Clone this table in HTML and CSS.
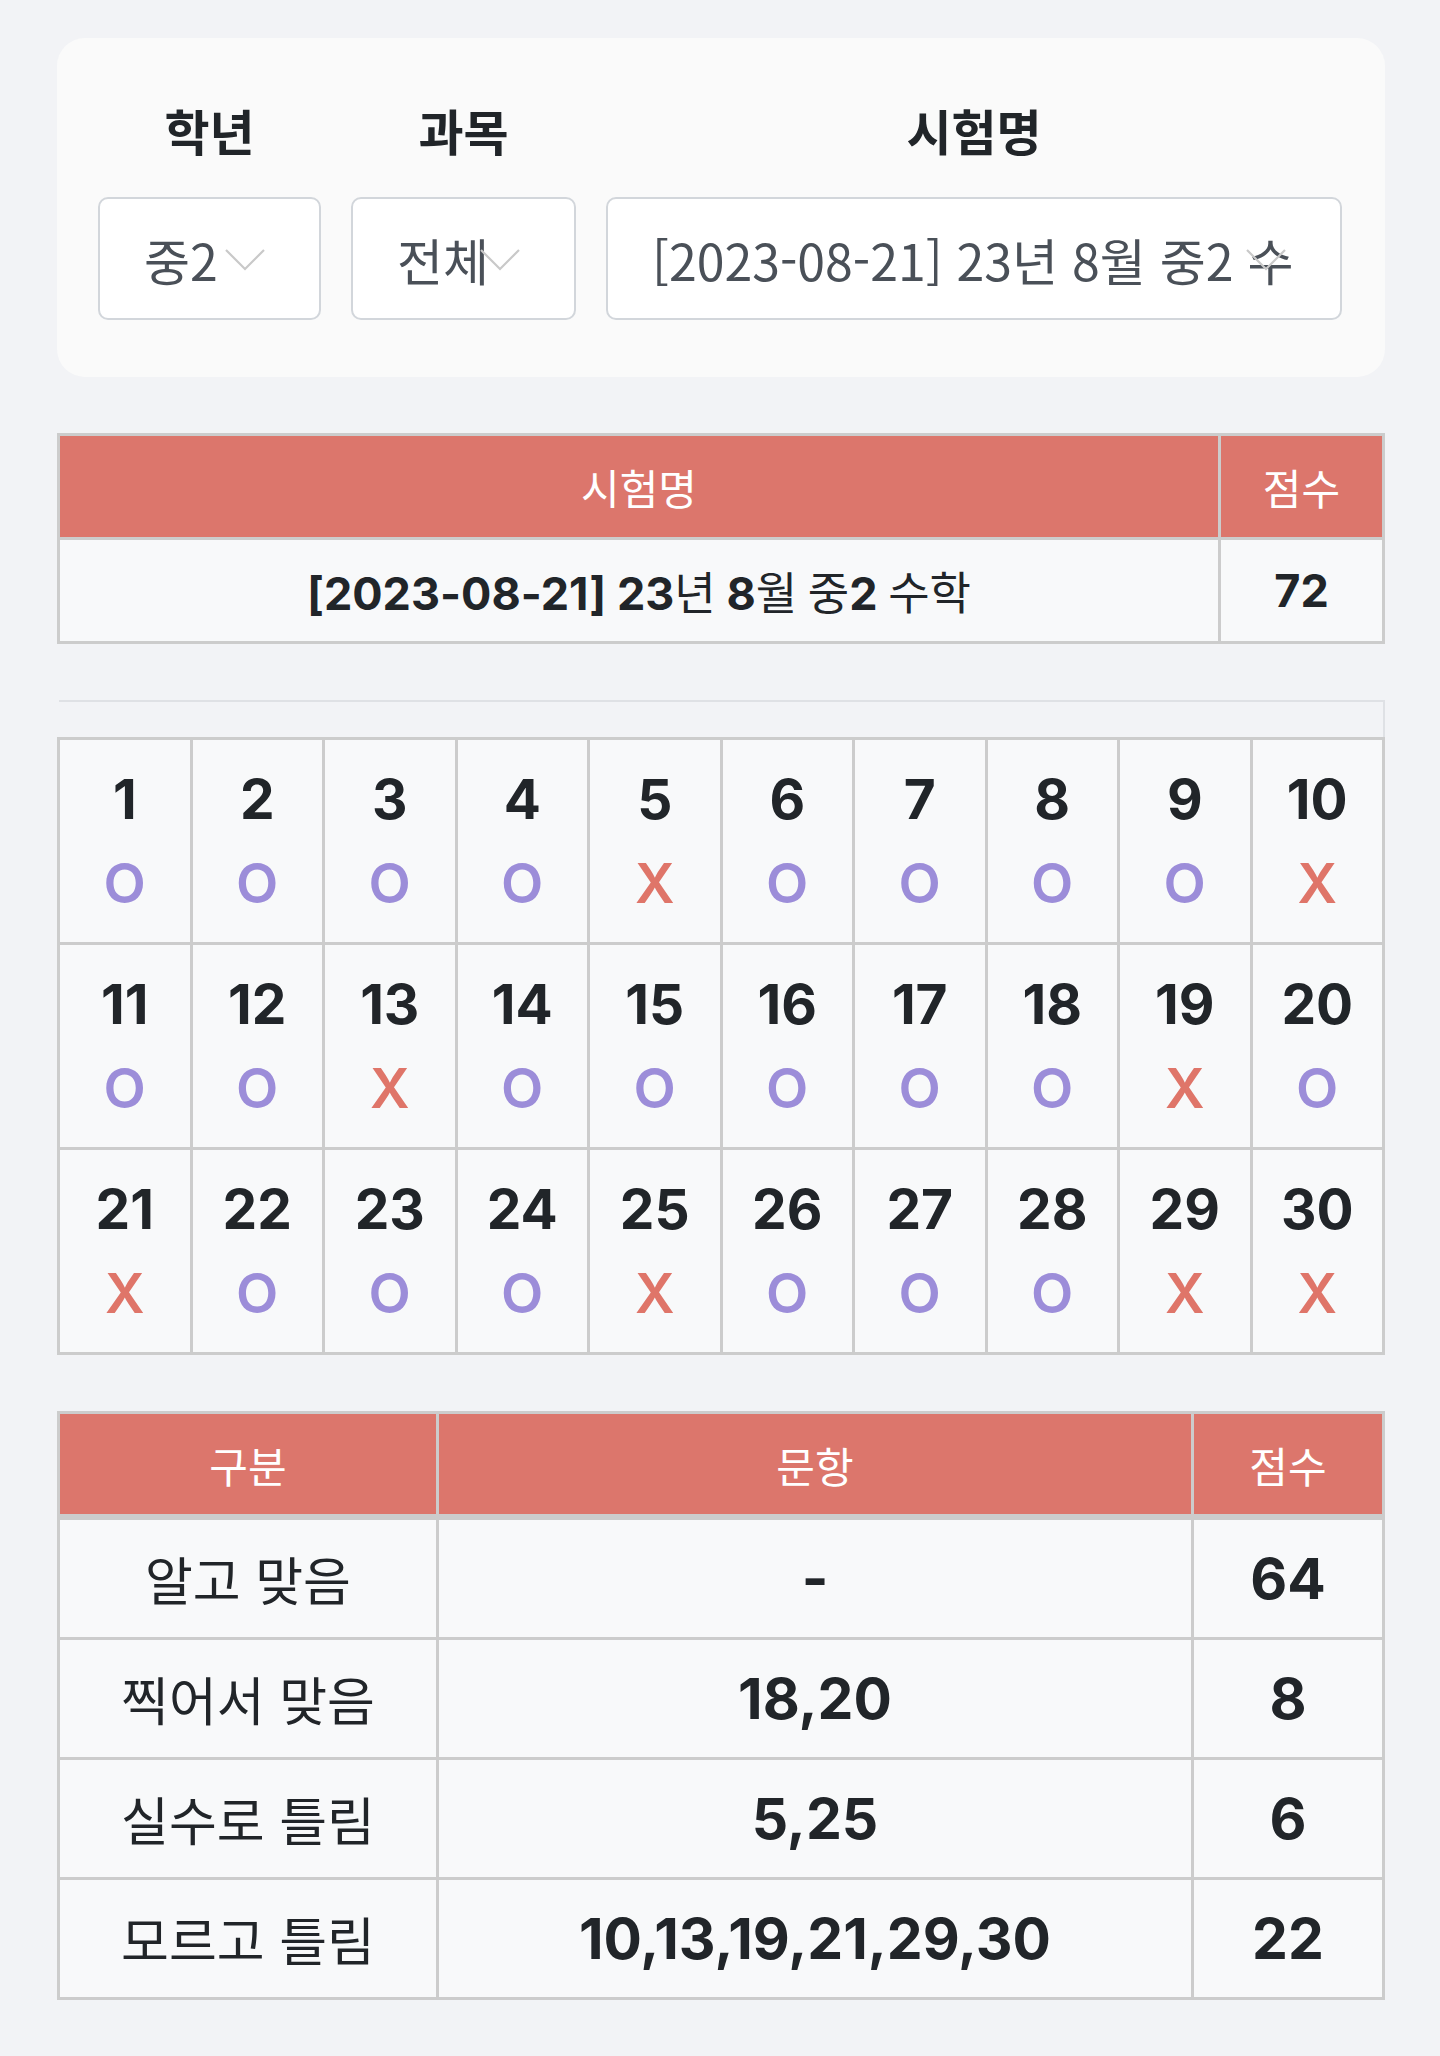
FILE: index.html
```html
<!DOCTYPE html>
<html lang="ko">
<head>
<meta charset="utf-8">
<title>시험 결과</title>
<link rel="stylesheet" href="styles.css">
</head>
<body>
<main class="page">
  <section class="filter-card">
    <div class="field field-grade">
      <div class="field-label">학년</div>
      <div class="select">
        <span class="select-value">중2</span>
        <svg class="chev" viewBox="0 0 40 22" aria-hidden="true"><polyline points="1,1 20,20 39,1" /></svg>
      </div>
    </div>
    <div class="field field-subject">
      <div class="field-label">과목</div>
      <div class="select">
        <span class="select-value">전체</span>
        <svg class="chev" viewBox="0 0 40 22" aria-hidden="true"><polyline points="1,1 20,20 39,1" /></svg>
      </div>
    </div>
    <div class="field field-exam">
      <div class="field-label">시험명</div>
      <div class="select">
        <span class="select-value select-value-clip">[2023-08-21] 23년 8월 중2 수학</span>
        <svg class="chev" viewBox="0 0 40 22" aria-hidden="true"><polyline points="1,1 20,20 39,1" /></svg>
      </div>
    </div>
  </section>

  <table class="exam-table">
    <thead>
      <tr><th class="col-name">시험명</th><th class="col-score">점수</th></tr>
    </thead>
    <tbody>
      <tr>
        <td class="col-name">[2023-08-21] 23<span class="kr">년</span> 8<span class="kr">월</span> <span class="kr">중</span>2 <span class="kr">수학</span></td>
        <td class="col-score">72</td>
      </tr>
    </tbody>
  </table>

  <div class="answer-head"></div>
  <div class="answer-grid">
    <div class="cell"><div class="q-num">1</div><div class="q-mark o">O</div></div>
    <div class="cell"><div class="q-num">2</div><div class="q-mark o">O</div></div>
    <div class="cell"><div class="q-num">3</div><div class="q-mark o">O</div></div>
    <div class="cell"><div class="q-num">4</div><div class="q-mark o">O</div></div>
    <div class="cell"><div class="q-num">5</div><div class="q-mark x">X</div></div>
    <div class="cell"><div class="q-num">6</div><div class="q-mark o">O</div></div>
    <div class="cell"><div class="q-num">7</div><div class="q-mark o">O</div></div>
    <div class="cell"><div class="q-num">8</div><div class="q-mark o">O</div></div>
    <div class="cell"><div class="q-num">9</div><div class="q-mark o">O</div></div>
    <div class="cell"><div class="q-num">10</div><div class="q-mark x">X</div></div>
    <div class="cell"><div class="q-num">11</div><div class="q-mark o">O</div></div>
    <div class="cell"><div class="q-num">12</div><div class="q-mark o">O</div></div>
    <div class="cell"><div class="q-num">13</div><div class="q-mark x">X</div></div>
    <div class="cell"><div class="q-num">14</div><div class="q-mark o">O</div></div>
    <div class="cell"><div class="q-num">15</div><div class="q-mark o">O</div></div>
    <div class="cell"><div class="q-num">16</div><div class="q-mark o">O</div></div>
    <div class="cell"><div class="q-num">17</div><div class="q-mark o">O</div></div>
    <div class="cell"><div class="q-num">18</div><div class="q-mark o">O</div></div>
    <div class="cell"><div class="q-num">19</div><div class="q-mark x">X</div></div>
    <div class="cell"><div class="q-num">20</div><div class="q-mark o">O</div></div>
    <div class="cell"><div class="q-num">21</div><div class="q-mark x">X</div></div>
    <div class="cell"><div class="q-num">22</div><div class="q-mark o">O</div></div>
    <div class="cell"><div class="q-num">23</div><div class="q-mark o">O</div></div>
    <div class="cell"><div class="q-num">24</div><div class="q-mark o">O</div></div>
    <div class="cell"><div class="q-num">25</div><div class="q-mark x">X</div></div>
    <div class="cell"><div class="q-num">26</div><div class="q-mark o">O</div></div>
    <div class="cell"><div class="q-num">27</div><div class="q-mark o">O</div></div>
    <div class="cell"><div class="q-num">28</div><div class="q-mark o">O</div></div>
    <div class="cell"><div class="q-num">29</div><div class="q-mark x">X</div></div>
    <div class="cell"><div class="q-num">30</div><div class="q-mark x">X</div></div>
  </div>

  <table class="summary-table">
    <thead>
      <tr><th class="col-kind">구분</th><th class="col-items">문항</th><th class="col-pts">점수</th></tr>
    </thead>
    <tbody>
      <tr><td class="col-kind">알고 맞음</td><td class="col-items num">-</td><td class="col-pts num">64</td></tr>
      <tr><td class="col-kind">찍어서 맞음</td><td class="col-items num">18,20</td><td class="col-pts num">8</td></tr>
      <tr><td class="col-kind">실수로 틀림</td><td class="col-items num">5,25</td><td class="col-pts num">6</td></tr>
      <tr><td class="col-kind">모르고 틀림</td><td class="col-items num">10,13,19,21,29,30</td><td class="col-pts num">22</td></tr>
    </tbody>
  </table>
</main>
</body>
</html>
```

FILE: styles.css
```css
* { box-sizing: border-box; }

body {
  margin: 0;
  background: #f2f3f6;
  font-family: "Noto Sans CJK KR", "Noto Sans", sans-serif;
  color: #212529;
}

.page {
  padding: 38px 55px 52px 57px;
}

/* ---------- filter card ---------- */
.filter-card {
  background: #fafafa;
  border-radius: 28px;
  padding: 60px 43px 57px 41px;
  display: flex;
  gap: 30px;
}

.field {
  display: flex;
  flex-direction: column;
  gap: 35px;
}

.field-grade { width: 223px; }
.field-subject { width: 225px; }
.field-exam { flex: 1; min-width: 0; }

.field-label {
  text-align: center;
  font-size: 49px;
  font-weight: 700;
  line-height: 64px;
  color: #212529;
}

.select {
  position: relative;
  height: 123px;
  background: #ffffff;
  border: 2px solid #d2d6db;
  border-radius: 10px;
  padding: 0 46px 0 44px;
  display: flex;
  align-items: center;
}

.select-value {
  flex: 1;
  min-width: 0;
  font-size: 50px;
  line-height: 80px;
  color: #4a5058;
  white-space: nowrap;
}

.select-value-clip {
  overflow: hidden;
}

.chev {
  position: absolute;
  right: 54px;
  top: 50px;
  width: 40px;
  height: 22px;
}

.chev polyline {
  fill: none;
  stroke: #c9c9c9;
  stroke-width: 2.2;
}

/* ---------- shared table ---------- */
.exam-table,
.summary-table {
  width: 100%;
  border-collapse: separate;
  border-spacing: 0;
  border-top: 3px solid #cccccc;
  border-left: 3px solid #cccccc;
  font-family: "Inter", "Noto Sans CJK KR", sans-serif;
}

.exam-table th,
.exam-table td,
.summary-table th,
.summary-table td {
  border-right: 3px solid #cccccc;
  border-bottom: 3px solid #cccccc;
  padding: 0;
  text-align: center;
  vertical-align: middle;
}

.exam-table th,
.summary-table th {
  background: #dc766c;
  color: #ffffff;
  font-family: "Noto Sans CJK KR", sans-serif;
  font-weight: 400;
}

.exam-table td,
.summary-table td {
  background: #f8f9fa;
  color: #212529;
}

/* ---------- exam table ---------- */
.exam-table {
  margin-top: 56px;
}

.exam-table th {
  height: 104px;
  font-size: 42px;
}

.exam-table td {
  height: 104px;
  font-size: 45px;
  font-weight: 700;
}

.exam-table .col-score { width: 164px; }

.kr {
  font-family: "Noto Sans CJK KR", sans-serif;
  font-weight: 400;
}

/* ---------- answer grid ---------- */
.answer-head {
  margin-top: 56px;
  margin-left: 2px;
  height: 37px;
  border-top: 2px solid #dfe1e5;
  border-right: 2px solid #dfe1e5;
}

.answer-grid {
  display: grid;
  grid-template-columns: repeat(10, 1fr);
  border-top: 3px solid #cccccc;
  border-left: 3px solid #cccccc;
  font-family: "Inter", sans-serif;
}

.cell {
  background: #f8f9fa;
  border-right: 3px solid #cccccc;
  border-bottom: 3px solid #cccccc;
  padding: 17px 0;
  text-align: center;
}

.q-num {
  font-size: 55px;
  font-weight: 700;
  line-height: 84px;
  color: #212529;
}

.q-mark {
  font-size: 55px;
  font-weight: 600;
  line-height: 84px;
}

.q-mark.o { color: #9c8dd9; }
.q-mark.x { color: #df7569; }

/* ---------- summary table ---------- */
.summary-table {
  margin-top: 56px;
}

.summary-table th {
  height: 106px;
  font-size: 42px;
  border-bottom-width: 6px;
}

.summary-table td {
  height: 120px;
  font-size: 57px;
}

.summary-table td.col-kind {
  font-family: "Noto Sans CJK KR", sans-serif;
  font-weight: 400;
  font-size: 52px;
}

.summary-table td.num {
  font-weight: 700;
}

.summary-table .col-kind { width: 379px; }
.summary-table .col-pts { width: 191px; }
```
